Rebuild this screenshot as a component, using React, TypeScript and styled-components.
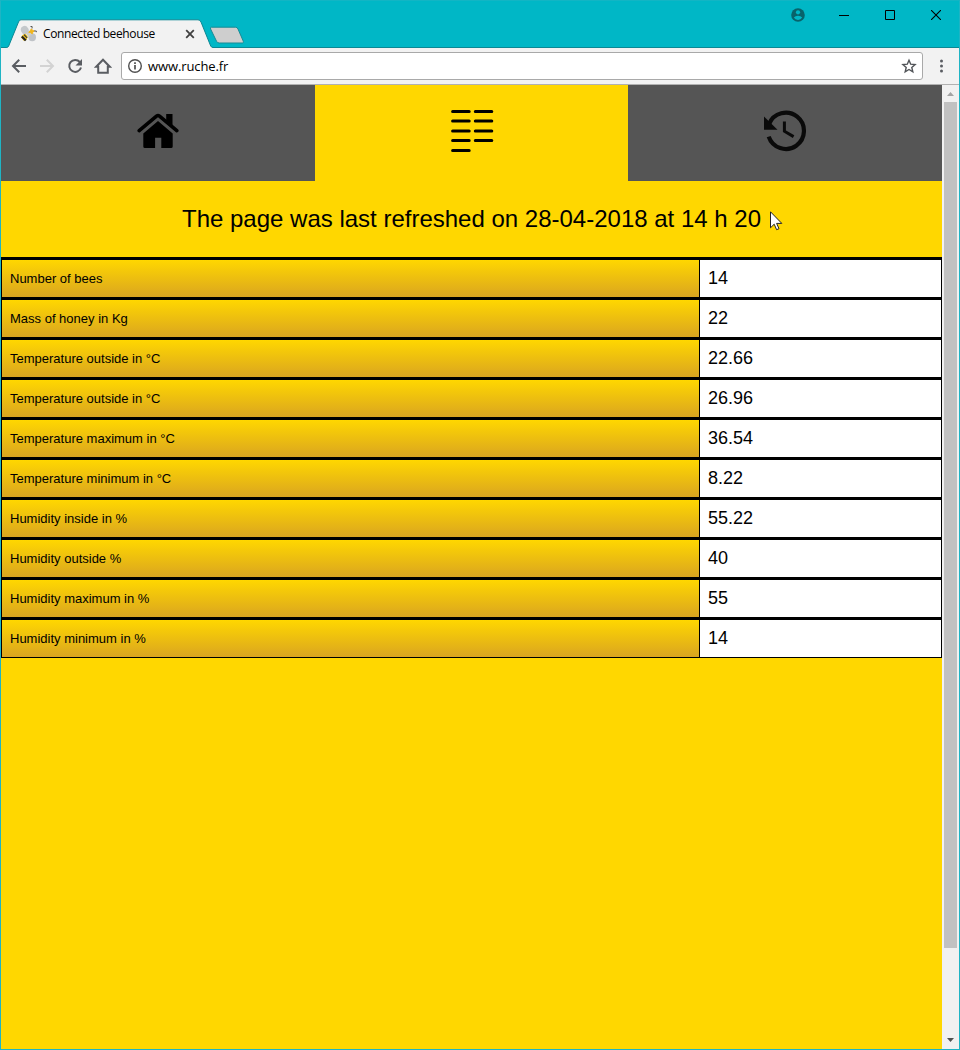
import React from 'react';
import styled, { createGlobalStyle } from 'styled-components';

const GlobalStyle = createGlobalStyle`
  * { box-sizing: border-box; }
  body { margin: 0; overflow: hidden; font-family: "Liberation Sans", Arial, sans-serif; }
  svg { display: block; flex: none; }
`;

const Window = styled.div`
  position: relative;
  display: flex;
  flex-direction: column;
  width: 960px;
  height: 1050px;
  border: 1px solid #1fb4c4;
  border-top-color: #12b5c4;
  background: #00b7c6;
`;

const TitleBar = styled.header`
  display: flex;
  justify-content: space-between;
  height: 47px;
  border-bottom: 1px solid #0b8894;
`;

const TabStrip = styled.div`
  position: relative;
  width: 260px;
  height: 47px;
`;

const TabShape = styled.svg`
  position: absolute;
  left: 0;
  top: 0;
`;

const TabContent = styled.div`
  position: relative;
  display: flex;
  align-items: center;
  width: 200px;
  padding: 17px 0 0 19px;
  height: 49px;
`;

const TabTitle = styled.span`
  width: 142px;
  margin-left: 5px;
  font: 12px/18px "Open Sans", sans-serif;
  letter-spacing: -0.38px;
  color: #000;
  white-space: nowrap;
`;

const WindowControls = styled.div`
  display: flex;
  height: 28px;
`;

const Control = styled.button`
  display: flex;
  align-items: center;
  justify-content: center;
  width: 46px;
  height: 28px;
  padding: 0;
  border: 0;
  background: none;
`;

const Toolbar = styled.nav`
  display: flex;
  align-items: center;
  height: 37px;
  padding-left: 4px;
  background: #f2f2f2;
  border-bottom: 1px solid #b1b1b1;
`;

const ToolButton = styled.button`
  display: flex;
  align-items: center;
  justify-content: center;
  width: 28px;
  height: 28px;
  padding: 0;
  border: 0;
  background: none;
`;

const AddressBar = styled.div`
  display: flex;
  align-items: center;
  width: 802px;
  height: 28px;
  margin: 0 4px;
  padding: 0 5px;
  border: 1px solid #a9a9a9;
  border-radius: 3px;
  background: #fff;
`;

const Url = styled.span`
  flex: 1;
  margin-left: 5px;
  font: 13px/20px "Open Sans", sans-serif;
  letter-spacing: -0.1px;
  color: #000;
`;

const Viewport = styled.div`
  display: flex;
  flex: 1;
`;

const Page = styled.main`
  width: 941px;
  background: #ffd700;
`;

const Menu = styled.nav`
  display: grid;
  grid-template-columns: 314px 313px 314px;
  height: 96px;
`;

const MenuItem = styled.a<{ $active?: boolean }>`
  display: flex;
  align-items: center;
  justify-content: center;
  padding-bottom: 4px;
  background: ${(p) => (p.$active ? '#ffd700' : '#555')};
`;

const Refreshed = styled.p`
  height: 76px;
  margin: 0;
  font-size: 24px;
  line-height: 76px;
  text-align: center;
  color: #000;
`;

const Table = styled.div`
  border: 1px solid #000;
  border-top: 0;
`;

const Row = styled.div`
  display: flex;
  height: 40px;
  border-top: 3px solid #000;
`;

const Label = styled.div`
  width: 698px;
  padding-left: 8px;
  border-right: 1px solid #000;
  font-size: 13px;
  line-height: 37px;
  color: #000;
  background: linear-gradient(#ffd700, #daa520);
`;

const Value = styled.div`
  flex: 1;
  padding-left: 8px;
  font-size: 18px;
  line-height: 36px;
  color: #000;
  background: #fff;
`;

const Scrollbar = styled.div`
  display: flex;
  flex-direction: column;
  align-items: center;
  width: 17px;
  background: #f1f1f1;
`;

const Thumb = styled.div`
  width: 13px;
  height: 846px;
  background: #c1c1c1;
`;

const ScrollSpace = styled.div`
  flex: 1;
`;

const Pointer = styled.svg`
  position: absolute;
  left: 769px;
  top: 210px;
`;

const readings: [string, string][] = [
  ['Number of bees', '14'],
  ['Mass of honey in Kg', '22'],
  ['Temperature outside in °C', '22.66'],
  ['Temperature outside in °C', '26.96'],
  ['Temperature maximum in °C', '36.54'],
  ['Temperature minimum in °C', '8.22'],
  ['Humidity inside in %', '55.22'],
  ['Humidity outside %', '40'],
  ['Humidity maximum in %', '55'],
  ['Humidity minimum in %', '14'],
];

const BeeIcon = () => (
  <svg width="18" height="18" viewBox="0 0 18 18">
    <ellipse cx="4.8" cy="5" rx="3.8" ry="4.3" fill="#c4c8cb" transform="rotate(-25 5 5)" />
    <ellipse cx="12.2" cy="12.3" rx="3.8" ry="4" fill="#bfc3c7" />
    <path d="M6 8.5 9.5 5.5l2.5 3.5-3.5 3z" fill="#cfcfc6" />
    <path d="M1.2 12.5l1.3-2.5 3-1.2 2.2 2.4-1 3.6-2.7 1.2z" fill="#efc118" />
    <path d="M1.8 11.5l4 4" stroke="#222" strokeWidth="2.2" />
    <path d="M4 9.6l3.2 3.2" stroke="#333" strokeWidth="1.2" />
    <path d="M11.4 3.8l1 1.5 1.8.6-1.4 1.3-.6 1.7-1.5-1.3-2-.4 1.5-1.4z" fill="#f0b51c" stroke="#f0b51c" />
    <path d="M10.5 1.5h1.6V3.4M14 6h2.3v1.2" stroke="#555" fill="none" />
  </svg>
);

const HomeIcon = () => (
  <svg width="42" height="36" viewBox="0 0 42 36">
    <path d="M6.3 20.4 21 7.9l14.7 12.5v13q0 1.6-1.6 1.6H24.3V24.7h-6.2V35H7.9q-1.6 0-1.6-1.6z" fill="#000" />
    <path d="M2.2 17.7 19.5 3.1q1.5-1.2 3 0L39.8 17.7" stroke="#000" strokeWidth="3.6" fill="none" strokeLinejoin="round" strokeLinecap="round" />
    <path d="M29.2 1.1h6.3v13l-6.3-5.4z" fill="#000" />
    <path d="M4.4 19.6 21 5.6l16.6 14" stroke="#555" strokeWidth="1.1" fill="none" />
  </svg>
);

const ListIcon = () => (
  <svg width="44" height="44" viewBox="0 0 44 44">
    <path
      d="M2.6 2.4h16.6M25.3 2.4h16.5M2.6 12.1h16.6M25.3 12.1h16.5M2.6 21.9h16.6M25.3 21.9h16.5M2.6 31.6h16.6M25.3 31.6h16.5M2.6 41.4h16.6"
      stroke="#000"
      strokeWidth="3"
      strokeLinecap="round"
    />
  </svg>
);

const HistoryIcon = () => (
  <svg width="44" height="42" viewBox="0 0 44 42">
    <path d="M6.1 14A18.1 18.1 0 1 1 5.7 26.6" stroke="#0a0a0a" strokeWidth="4.2" fill="none" />
    <path d="M1 6.5V19.8h13.5z" fill="#0a0a0a" />
    <path d="M21.4 11.6v9.6l9.2 5.4" stroke="#0a0a0a" strokeWidth="3" fill="none" />
  </svg>
);

export default function App() {
  return (
    <>
      <GlobalStyle />
      <Window>
        <TitleBar>
          <TabStrip>
            <TabShape width="260" height="48" viewBox="0 0 260 48">
              <path d="M0 46.5H5.5Q7 46.5 7.7 45L17.5 21Q18.3 18.8 20 18.8H197Q199 18.8 200 21L209.7 45Q210.5 46.5 212 46.5V48H0z" fill="#f2f2f2" />
              <path d="M0 46.5H5.5Q7 46.5 7.7 45L17.5 21Q18.3 18.8 20 18.8H197Q199 18.8 200 21L209.7 45Q210.5 46.5 212 46.5" fill="none" stroke="#0b8894" />
              <path d="M0 47V46H6L5 47z" fill="#0b8894" />
              <path d="M210.5 26.2H234.5Q236.2 26.2 237 28L242.3 40.2Q242.8 42 241.4 42H218.2Q216.4 42 215.5 40.2L209.6 28Q209 26.2 210.5 26.2z" fill="#cecece" stroke="#168b96" />
            </TabShape>
            <TabContent>
              <BeeIcon />
              <TabTitle>Connected beehouse</TabTitle>
              <svg width="10" height="10" viewBox="0 0 10 10">
                <path d="M1.2 1.2l7.6 7.6M8.8 1.2 1.2 8.8" stroke="#404040" strokeWidth="1.8" />
              </svg>
            </TabContent>
          </TabStrip>
          <WindowControls>
            <Control aria-label="Profile">
              <svg width="14" height="14" viewBox="0 0 14 14">
                <circle cx="7" cy="7" r="6.8" fill="#08636b" />
                <circle cx="7" cy="4.3" r="2.1" fill="#00b7c6" />
                <path d="M2.8 9.6Q4.4 7.7 7 7.7t4.2 1.9Q9.7 12 7 12T2.8 9.6z" fill="#00b7c6" />
              </svg>
            </Control>
            <Control aria-label="Minimize">
              <svg width="10" height="10"><path d="M0 5.5h10" stroke="#000" /></svg>
            </Control>
            <Control aria-label="Maximize">
              <svg width="10" height="10"><path d="M.5.5h9v9h-9z" fill="none" stroke="#000" /></svg>
            </Control>
            <Control aria-label="Close">
              <svg width="10" height="10"><path d="M0 0l10 10M10 0 0 10" stroke="#000" strokeWidth="1.1" /></svg>
            </Control>
          </WindowControls>
        </TitleBar>
        <Toolbar>
          <ToolButton aria-label="Back">
            <svg width="16" height="16" viewBox="0 0 16 16"><path d="M15 8H2.5M8.2 1.8 2 8l6.2 6.2" stroke="#5a5d62" strokeWidth="2" fill="none" /></svg>
          </ToolButton>
          <ToolButton aria-label="Forward">
            <svg width="16" height="16" viewBox="0 0 16 16"><path d="M1 8h12.5M7.8 1.8 14 8l-6.2 6.2" stroke="#d3d3d3" strokeWidth="2" fill="none" /></svg>
          </ToolButton>
          <ToolButton aria-label="Reload">
            <svg width="16" height="16" viewBox="0 0 16 16">
              <path d="M12.8 4A6 6 0 1 0 14 9.5" stroke="#5a5d62" strokeWidth="2" fill="none" />
              <path d="M15 1v6.5H8.5z" fill="#5a5d62" />
            </svg>
          </ToolButton>
          <ToolButton aria-label="Home">
            <svg width="18" height="16" viewBox="0 0 18 16"><path d="M2.2 8.7H4.2v6.1h9.6V8.7h2L9 1.7z" stroke="#5a5d62" strokeWidth="2" fill="none" /></svg>
          </ToolButton>
          <AddressBar>
            <svg width="16" height="16" viewBox="0 0 16 16">
              <circle cx="8" cy="8" r="6.3" fill="none" stroke="#505050" strokeWidth="1.4" />
              <path d="M8 7v4.5M8 4.2v1.7" stroke="#505050" strokeWidth="1.7" />
            </svg>
            <Url>www.ruche.fr</Url>
            <svg width="16" height="16" viewBox="0 0 16 16">
              <path d="M8 2.2l1.7 4 4.4.4-3.3 2.9 1 4.3L8 11.5l-3.8 2.3 1-4.3-3.3-2.9 4.4-.4z" fill="none" stroke="#505357" strokeWidth="1.4" />
            </svg>
          </AddressBar>
          <ToolButton aria-label="Menu">
            <svg width="4" height="14" viewBox="0 0 4 14" fill="#5a5d62">
              <circle cx="2.5" cy="2" r="1.5" />
              <circle cx="2.5" cy="7" r="1.5" />
              <circle cx="2.5" cy="12" r="1.5" />
            </svg>
          </ToolButton>
        </Toolbar>
        <Viewport>
          <Page>
            <Menu>
              <MenuItem><HomeIcon /></MenuItem>
              <MenuItem $active><ListIcon /></MenuItem>
              <MenuItem><HistoryIcon /></MenuItem>
            </Menu>
            <Refreshed>The page was last refreshed on 28-04-2018 at 14 h 20</Refreshed>
            <Table>
              {readings.map(([label, value], i) => (
                <Row key={i}>
                  <Label>{label}</Label>
                  <Value>{value}</Value>
                </Row>
              ))}
            </Table>
          </Page>
          <Scrollbar>
            <svg width="17" height="17"><path d="M5 11h7L8.5 7z" fill="#a3a3a3" /></svg>
            <Thumb />
            <ScrollSpace />
            <svg width="17" height="17"><path d="M5 6h7l-3.5 4z" fill="#505050" /></svg>
          </Scrollbar>
        </Viewport>
        <Pointer width="13" height="20" viewBox="0 0 13 20">
          <path d="M.5.8v16l3.7-3.6 2.4 5.5 2.4-1-2.4-5.3h5.2z" fill="#fff" stroke="#222" strokeWidth="1" />
        </Pointer>
      </Window>
    </>
  );
}
